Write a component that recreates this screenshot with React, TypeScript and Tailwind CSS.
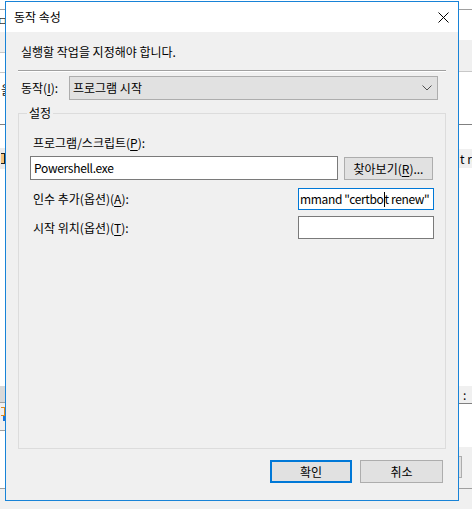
import React from "react";

const font = "font-['Noto_Sans_CJK_KR','Noto_Sans',sans-serif]";

function U({ c }: { c: string }) {
  return <span className="underline underline-offset-[2px]">{c}</span>;
}

function LeftStrip() {
  return (
    <div className="flex w-[5px] shrink-0 flex-col overflow-hidden bg-white">
      <div className="h-[9px] bg-white" />
      <div className="h-[1px] bg-[#a0a0a0]" />
      <div className="flex h-[22px] items-center justify-end overflow-hidden whitespace-nowrap text-[12px] text-[#333]">
        <span className="translate-x-[3px]">ㅁ</span>
      </div>
      <div className="h-[20px] bg-[#f0f0f0]" />
      <div className="h-[1px] bg-[#c8c8c8]" />
      <div className="h-[19px] bg-white" />
      <div className="h-[1px] bg-[#c8c8c8]" />
      <div className="flex h-[51px] items-start justify-end overflow-hidden whitespace-nowrap pt-[8px] text-[12px] leading-[18px] text-[#222]">
        <span className="translate-x-[7px]">을</span>
      </div>
      <div className="h-[1px] bg-[#808080]" />
      <div className="h-[23px] bg-white" />
      <div className="flex h-[21px] items-center justify-end bg-[#ececec]">
        <div className="h-[11px] w-[4px] border-y border-r border-[#222] bg-[#f4c27a]" />
      </div>
      <div className="h-[217px] bg-white" />
      <div className="h-[16px] bg-[#d9d9d9]" />
      <div className="h-[1px] bg-[#a0a0a0]" />
      <div className="flex h-[27px] items-start justify-end bg-[#f0f0f0] pt-[4px]">
        <div className="flex h-[14px] w-[4px] flex-col">
          <div className="h-[9px] w-[4px] border-y border-r border-[#e08a1e]" />
          <div className="ml-[2px] h-[5px] w-[2px] bg-[#1a73d6]" />
        </div>
      </div>
      <div className="h-[1px] bg-[#a0a0a0]" />
      <div className="h-[57px] bg-white" />
      <div className="h-[1px] bg-[#a0a0a0]" />
      <div className="h-[20px] bg-[#f0f0f0]" />
    </div>
  );
}

function RightStrip() {
  return (
    <div className="flex w-[13px] shrink-0 flex-col overflow-hidden bg-white">
      <div className="h-[9px] bg-white" />
      <div className="h-[1px] bg-[#a0a0a0]" />
      <div className="h-[30px] bg-white" />
      <div className="h-[31px] bg-[#f0f0f0]" />
      <div className="h-[1px] bg-[#c8c8c8]" />
      <div className="h-[52px] bg-white" />
      <div className="h-[1px] bg-[#808080]" />
      <div className="h-[24px] bg-white" />
      <div className="flex h-[19px] items-center overflow-hidden whitespace-nowrap bg-[#f0f0f0] text-[12px] leading-[18px] text-black">
        <span className="pl-[1px]">t renew</span>
      </div>
      <div className="h-[218px] bg-white" />
      <div className="flex h-[17px] items-center overflow-hidden whitespace-nowrap bg-[#f0f0f0] text-[12px] leading-[17px] text-black">
        <span className="pl-[4px]">:</span>
      </div>
      <div className="h-[1px] bg-[#808080]" />
      <div className="h-[43px] bg-white" />
      <div className="h-[41px] bg-[#f0f0f0] pt-[9px]">
        <div className="h-[22px] w-[3px] border-y border-r border-[#adadad] bg-[#e1e1e1]" />
      </div>
      <div className="h-[1px] bg-[#a0a0a0]" />
      <div className="h-[20px] bg-[#f0f0f0]" />
    </div>
  );
}

function Dialog() {
  return (
    <div className="flex h-[500px] w-[454px] flex-col border border-[#1883d7] bg-[#f0f0f0] text-[12px] text-black">
      {/* title bar */}
      <div className="flex h-[30px] shrink-0 items-center justify-between bg-white pl-[8px] pr-[9px]">
        <span className="leading-[18px]">동작 속성</span>
        <svg width="11" height="11" viewBox="0 0 11 11" className="block">
          <path d="M0.5 0.5 L10.5 10.5 M10.5 0.5 L0.5 10.5" stroke="#000" strokeWidth="1" fill="none" />
        </svg>
      </div>

      {/* body */}
      <div className="flex flex-1 flex-col px-[12px]">
        <div className="mt-[11px] h-[18px] pl-[3px] leading-[18px]">실행할 작업을 지정해야 합니다.</div>
        <div className="mt-[9px] h-[2px] border-t border-b border-t-[#a0a0a0] border-b-white" />

        <div className="mt-[4px] flex h-[24px] items-center">
          <div className="w-[51px] shrink-0 pl-[3px] leading-[18px]">
            동작(<U c="I" />):
          </div>
          <div className="flex h-[24px] w-[369px] items-center justify-between border border-[#adadad] bg-[#e1e1e1] pl-[3px] pr-[5px]">
            <span className="leading-[18px]">프로그램 시작</span>
            <svg width="10" height="6" viewBox="0 0 10 6" className="block">
              <polyline points="0.5,0.5 5,5 9.5,0.5" stroke="#505050" strokeWidth="1" fill="none" />
            </svg>
          </div>
        </div>

        {/* group box */}
        <div className="relative mt-[13px] flex h-[336px] flex-col border border-[#dcdcdc]">
          <span className="absolute left-[8px] top-[-10px] bg-[#f0f0f0] px-[2px] leading-[18px]">설정</span>

          <div className="mt-[20px] h-[18px] pl-[14px] leading-[18px]">
            프로그램/스크립트(<U c="P" />):
          </div>
          <div className="mt-[4px] flex items-end pl-[11px]">
            <div className="flex h-[24px] w-[308px] items-center border border-[#7a7a7a] bg-white pl-[3px]">
              <span className="leading-[18px] tracking-[-0.3px]">Powershell.exe</span>
            </div>
            <div className="ml-[6px] flex h-[23px] w-[89px] items-center justify-center border border-[#adadad] bg-[#e1e1e1]">
              <span className="leading-[18px]">
                찾아보기(<U c="R" />)...
              </span>
            </div>
          </div>

          <div className="mt-[8px] flex items-center pr-[11px]">
            <div className="flex-1 pl-[14px] leading-[18px]">
              인수 추가(옵션)(<U c="A" />):
            </div>
            <div className="flex h-[22px] w-[136px] items-center overflow-hidden whitespace-nowrap border border-[#0078d7] bg-white pl-[1px] tracking-[-0.35px]">
              <span className="leading-[18px]">mmand "certbo</span>
              <span className="inline-block h-[15px] w-[1px] shrink-0 bg-black" />
              <span className="leading-[18px]">t renew"</span>
            </div>
          </div>

          <div className="mt-[6px] flex items-center pr-[11px]">
            <div className="flex-1 pl-[14px] leading-[18px]">
              시작 위치(옵션)(<U c="T" />):
            </div>
            <div className="h-[23px] w-[136px] border border-[#7a7a7a] bg-white" />
          </div>
        </div>

        {/* buttons */}
        <div className="mt-[11px] flex justify-end gap-[8px] pr-[3px]">
          <div className="flex h-[23px] w-[82px] items-center justify-center border-2 border-[#0078d7] bg-[#e1e1e1]">
            <span className="leading-[18px]">확인</span>
          </div>
          <div className="flex h-[23px] w-[83px] items-center justify-center border border-[#adadad] bg-[#e1e1e1]">
            <span className="leading-[18px]">취소</span>
          </div>
        </div>
      </div>
    </div>
  );
}

export default function App() {
  return (
    <div className={`flex h-[509px] w-[472px] overflow-hidden bg-[#f0f0f0] ${font}`}>
      <LeftStrip />
      <div className="flex w-[454px] shrink-0 flex-col bg-[#f0f0f0]">
        <div className="h-[1px] bg-white" />
        <Dialog />
      </div>
      <RightStrip />
    </div>
  );
}
